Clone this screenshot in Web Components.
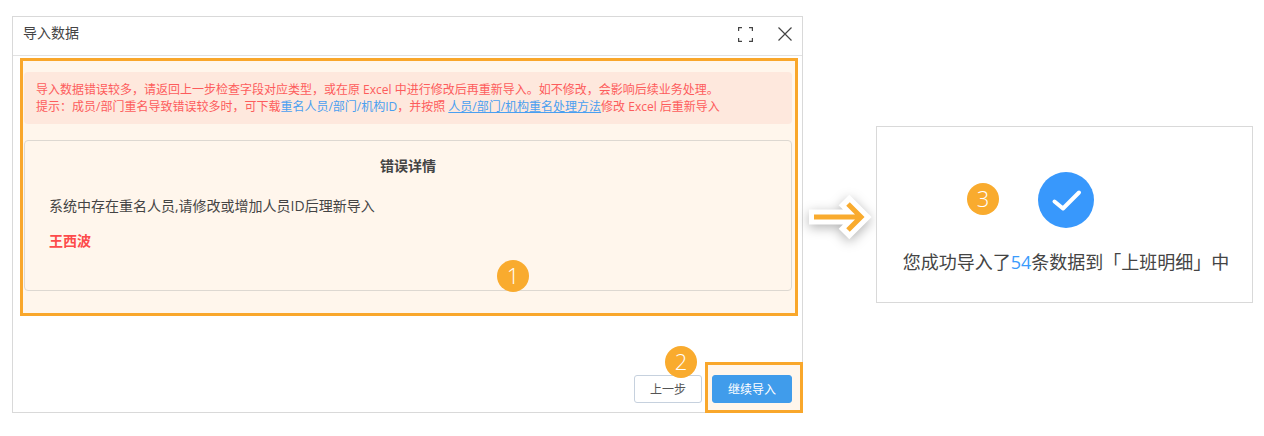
<!DOCTYPE html>
<html lang="zh-CN"><head><meta charset="utf-8"><title>导入数据</title>
<style>
html,body{margin:0;padding:0;background:#fff}
body{font-family:"Open Sans","Noto Sans CJK SC",sans-serif;color:#333}
x-alert a{color:#4a9ff0}
x-alert a.u{text-decoration:underline;margin-left:3px}
</style></head><body>
<x-page>
  <x-dialog>
    <span slot="title">导入数据</span>
    <x-alert>
      <div>导入数据错误较多，请返回上一步检查字段对应类型，或在原 Excel 中进行修改后再重新导入。如不修改，会影响后续业务处理。</div>
      <div>提示：成员/部门重名导致错误较多时，可下载<a>重名人员/部门/机构ID</a>，并按照<a class="u">人员/部门/机构重名处理方法</a>修改 Excel 后重新导入</div>
    </x-alert>
    <x-detail></x-detail>
  </x-dialog>
  <x-arrow></x-arrow>
  <x-result></x-result>
</x-page>
<script>
function def(name,css,html){
  customElements.define(name,class extends HTMLElement{
    connectedCallback(){
      if(this.shadowRoot)return;
      const r=this.attachShadow({mode:'open'});
      r.innerHTML='<style>'+css+'</style>'+html;
    }
  });
}
def('x-page',':host{display:flex;align-items:flex-start;width:1264px;height:436px;padding:16px 0 0 12px;box-sizing:border-box;overflow:hidden}','<slot></slot>');
def('x-badge',`:host{position:absolute;display:flex;align-items:center;justify-content:center;width:32px;height:32px;box-sizing:border-box;padding-bottom:2px;border-radius:50%;background:#f9ab2e;color:#fff;font:300 22px/1 "Open Sans",sans-serif;z-index:3}`,'<slot></slot>');
def('x-btn',`:host{display:flex;align-items:center;justify-content:center;height:28px;box-sizing:border-box;border-radius:3px;font-size:12px;position:relative;z-index:1;border:1px solid #c6d1de;background:#fff;color:#555;width:68px}
:host([primary]){background:#409ceb;border-color:#409ceb;color:#fff;width:80px}`,'<slot></slot>');
def('x-dialog',`:host{display:flex;flex-direction:column;position:relative;width:791px;height:397px;box-sizing:border-box;border:1px solid #d9d9d9;background:#fff}
header{display:flex;align-items:flex-start;height:38px;padding:0 10px;border-bottom:1px solid #e2e2e2;font-size:14px;line-height:20px;color:#444;flex:none}
header .t{flex:1;padding-top:6px}
header svg{display:block;margin-top:10px}
.fs{margin-right:25px}
.hl{margin:2px 4px 0 7px;height:258px;box-sizing:border-box;border:3px solid #f9a72b;background:#fff6ec;padding:11px 3px 0 1px;flex:none}
footer{flex:1;display:flex;justify-content:flex-end;align-items:flex-end;gap:10px;padding:0 10px 9px 0;position:relative}
.box{position:absolute;right:-1px;bottom:-1px;width:98px;height:51px;box-sizing:border-box;border:3px solid #f9a72b;background:#fff6ec}
x-badge.a{left:484px;top:243px}
x-badge.b{left:652px;top:329px}`,
`<header><span class="t"><slot name="title"></slot></span>
<svg class="fs" width="15" height="15" viewBox="0 0 15 15" fill="none" stroke="#444" stroke-width="1.2"><path d="M.6 4V.6H4M11 .6H14.400V4M14.400 11V14.400H11M4 14.400H.6V11"/></svg>
<svg width="14" height="14" viewBox="0 0 14 14" fill="none" stroke="#444" stroke-width="1.200"><path d="M.5 .5L13.500 13.500M13.500 .5L.5 13.500"/></svg></header>
<div class="hl"><slot></slot></div>
<footer><div class="box"></div><x-btn>上一步</x-btn><x-btn primary>继续导入</x-btn></footer>
<x-badge class="a">1</x-badge><x-badge class="b">2</x-badge>`);
def('x-alert',`:host{display:block;height:52px;box-sizing:border-box;padding:9px 12px;border-radius:4px;background:#fee8dd;color:#fd5c5c;font-size:12px;line-height:17px;white-space:nowrap;margin-bottom:16px}`,'<slot></slot>');
def('x-detail',`:host{display:block;height:151px;box-sizing:border-box;border:1px solid #ddd8d1;border-radius:4px;padding:16px 24px 0}
h3{margin:0 0 21px;font-size:14px;line-height:18px;font-weight:700;text-align:center;color:#444}
p{margin:0;font-size:14px;line-height:20px;color:#444}
p.n{margin-top:15px;color:#fd4b4b;font-weight:700}`,
`<h3>错误详情</h3><p>系统中存在重名人员,请修改或增加人员ID后理新导入</p><p class="n">王西波</p>`);
def('x-arrow',`:host{display:block;width:73px;height:60px;margin-top:170px;flex:none;position:relative}
svg{display:block;overflow:visible;filter:drop-shadow(0 3px 6px rgba(0,0,0,.3))}`,
`<svg width="73" height="60" viewBox="0 0 73 60" fill="none" stroke-linejoin="miter"><path d="M6 31H56M41 14L58 31L41 48" stroke="#fff" stroke-width="15"/><path d="M11 31H56.500M45 18L58 31L45 44" stroke="#f9ab2e" stroke-width="5"/></svg>`);
def('x-result',`:host{display:flex;flex-direction:column;align-items:center;position:relative;width:377px;height:177px;box-sizing:border-box;border:1px solid #d9d9d9;margin-top:110px;flex:none;background:#fff;padding-top:45px}
svg{display:block;margin:0 0 21px 3px}
p{margin:0 0 0 3px;font-size:18px;line-height:26px;color:#444;white-space:nowrap}
b{font-weight:400;color:#3a9bfc}
x-badge{left:90px;top:56px}`,
`<x-badge>3</x-badge><svg width="56" height="56" viewBox="0 0 56 56"><circle cx="28" cy="28" r="28" fill="#3898fc"/><path d="M16.500 29.500L25 36.500L41 20.500" fill="none" stroke="#fff" stroke-width="4" stroke-linecap="round" stroke-linejoin="round"/></svg><p>您成功导入了<b>54</b>条数据到「上班明细」中</p>`);
</script>
</body></html>
